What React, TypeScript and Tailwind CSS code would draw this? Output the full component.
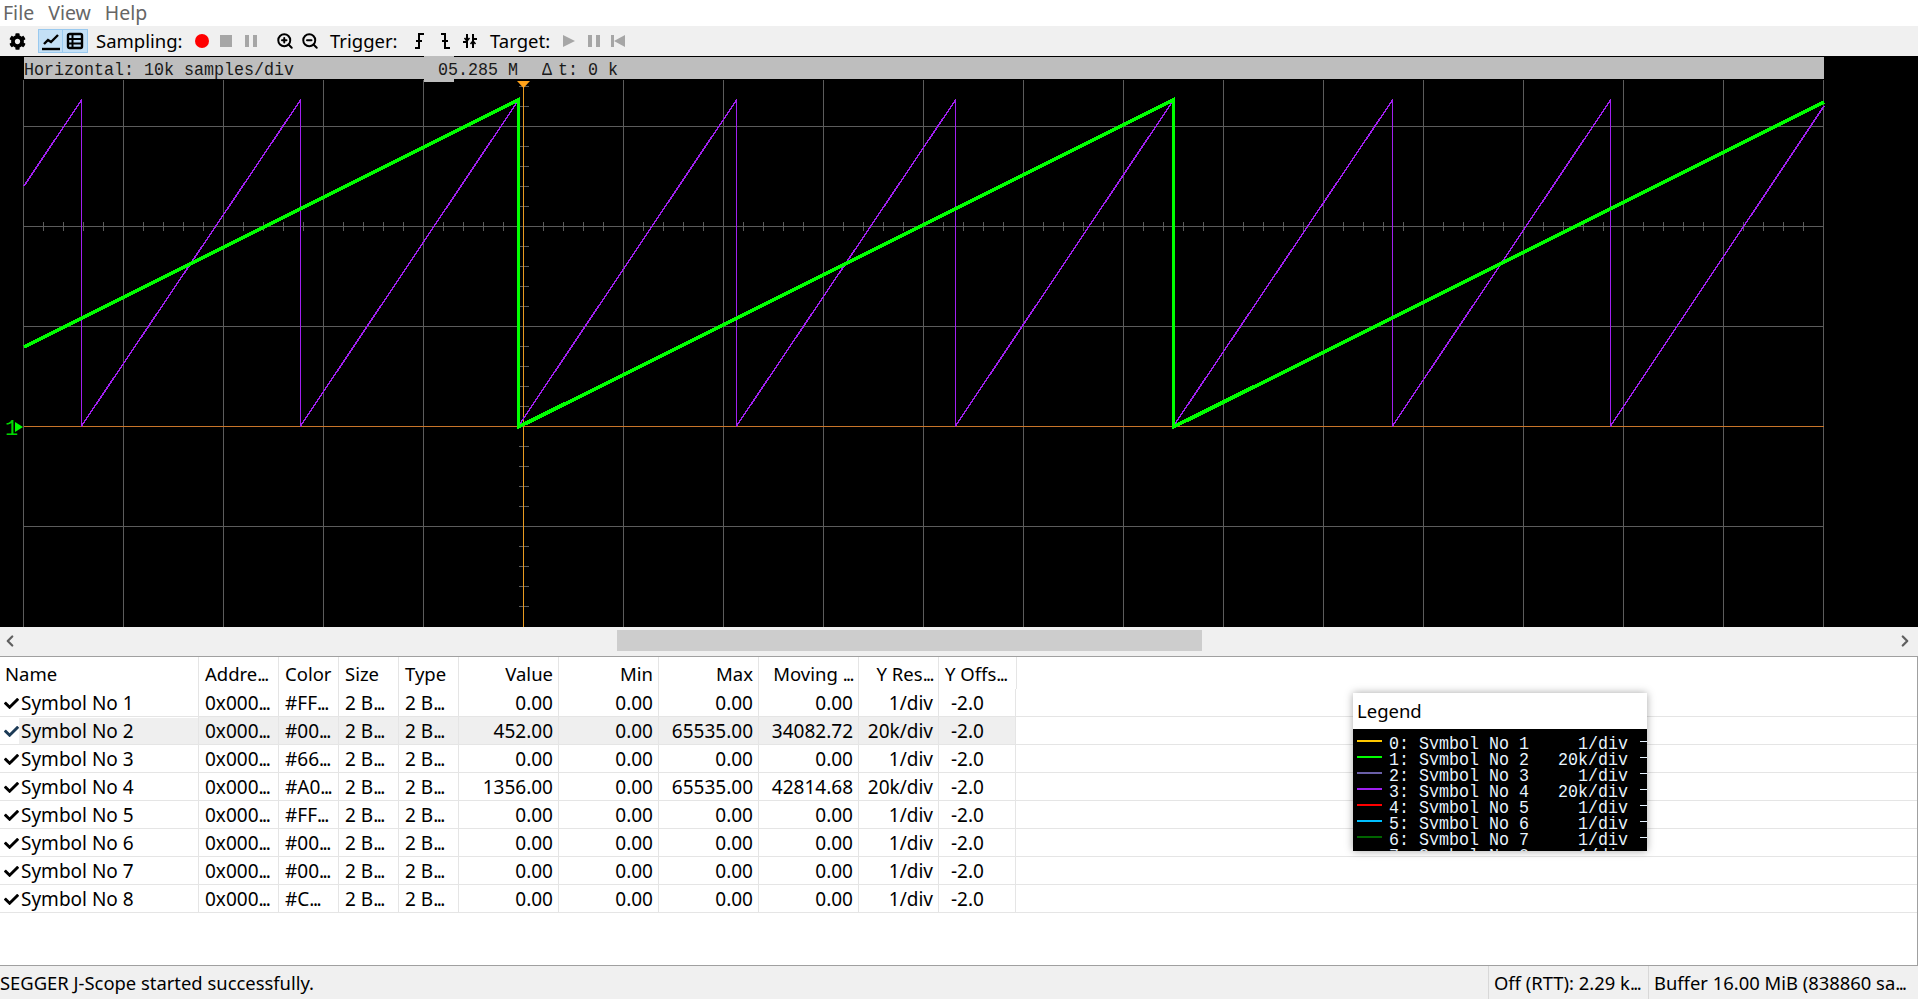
import { ChevronLeft, ChevronRight, ZoomIn, ZoomOut } from "lucide-react";
import { FaCog, FaCheck } from "react-icons/fa";

const UI_FONT = "font-['Noto_Sans','Open_Sans',sans-serif]";
const MONO_FONT = "font-['Liberation_Mono',monospace]";

const PURPLE_DROPS = [81.5, 300.5, 518.5, 736.5, 955.5, 1173.5, 1392.5, 1610.5];

function purplePoints() {
  const pts: string[] = ["24,186"];
  PURPLE_DROPS.forEach((x) => {
    pts.push(`${x},100`, `${x},426`);
  });
  pts.push("1824,106");
  return pts.join(" ");
}

const GREEN_POINTS = "24,347 518.5,100 518.5,427 1173.5,100 1173.5,427 1824,102";

const V_GRID = Array.from({ length: 19 }, (_, i) => 23.5 + i * 100).filter((x) => x !== 523.5);
const H_GRID = [126.5, 226.5, 326.5, 526.5];
const H_TICKS = Array.from({ length: 90 }, (_, i) => 23.5 + i * 20);
const V_TICKS = Array.from({ length: 27 }, (_, i) => 86.5 + i * 20);

function Scope() {
  return (
    <svg width="1918" height="571" viewBox="0 56 1918 571" className="block">
      <g stroke="#5c5c5c" strokeWidth="1" shapeRendering="crispEdges">
        {V_GRID.map((x) => (
          <line key={x} x1={x} x2={x} y1="80" y2="627" />
        ))}
        {H_GRID.map((y) => (
          <line key={y} x1="24" x2="1824" y1={y} y2={y} />
        ))}
        {H_TICKS.map((x) => (
          <line key={x} x1={x} x2={x} y1="222" y2="231" />
        ))}
        {V_TICKS.map((y) => (
          <line key={y} x1="519" x2="529" y1={y} y2={y} />
        ))}
      </g>
      <line x1="523.5" x2="523.5" y1="84" y2="627" stroke="#e89a20" shapeRendering="crispEdges" />
      <line x1="24" x2="1824" y1="426.5" y2="426.5" stroke="#c8752a" shapeRendering="crispEdges" />
      <polygon points="517,81 530,81 523.5,88" fill="#ffa21a" />
      <polyline points={purplePoints()} fill="none" stroke="#a020f0" strokeWidth="1.5" shapeRendering="crispEdges" />
      <polyline points={GREEN_POINTS} fill="none" stroke="#00ff00" strokeWidth="3.6" shapeRendering="crispEdges" />
      <text x="5" y="435" fill="#00d800" fontSize="22" fontFamily="Liberation Mono, monospace">
        1
      </text>
      <polygon points="15,422 23,427 15,432" fill="#00ff00" />
    </svg>
  );
}

function ChartIcon() {
  return (
    <svg width="20" height="20" viewBox="0 0 20 20" fill="none" stroke="#000" strokeWidth="2.4">
      <path d="M3 13 L7 9 L10 11 L17 4" />
      <path d="M1 18 H19" />
    </svg>
  );
}

function TableIcon() {
  return (
    <svg width="18" height="18" viewBox="0 0 18 18" fill="none" stroke="#000" strokeWidth="2">
      <rect x="2" y="2" width="14" height="14" rx="1.5" strokeWidth="2.4" />
      <path d="M2 7 H16 M2 11.5 H16 M6.5 2 V16" />
    </svg>
  );
}

function TriggerIcon({ kind }: { kind: "rise" | "fall" | "both" }) {
  if (kind === "both") {
    return (
      <svg width="14" height="18" viewBox="0 0 14 18" fill="none" stroke="#000" strokeWidth="2">
        <path d="M4 2 V16 M10 2 V16 M0 10 H4 M10 7 H14" />
        <path d="M1.5 6 L4 9 L6.5 6 M7.5 12 L10 9 L12.500 12" strokeWidth="1.5" />
      </svg>
    );
  }
  const d = kind === "rise" ? "M1 16 H5 V2 H10 M2 9 H8" : "M1 2 H5 V16 H10 M2 9 H8";
  return (
    <svg width="11" height="18" viewBox="0 0 11 18" fill="none" stroke="#000" strokeWidth="2">
      <path d={d} />
    </svg>
  );
}

function PauseIcon() {
  return (
    <span className="flex h-3 w-3 justify-between">
      <span className="h-3 w-1 bg-[#a6a6a6]" />
      <span className="h-3 w-1 bg-[#a6a6a6]" />
    </span>
  );
}

// the reference draws its "..." much tighter than this font does
function Trunc({ text }: { text: string }) {
  if (!text.endsWith("...")) return <>{text}</>;
  return (
    <span className="whitespace-pre">
      {text.slice(0, -3)}
      <span className="tracking-[-1.5px]">...</span>
    </span>
  );
}

function Toolbar() {
  return (
    <div className="flex h-[30px] items-center bg-[#f0f0f0] text-[18.5px] leading-[24px] text-black">
      <FaCog className="ml-[9px] h-[17px] w-[17px]" />
      <div className="ml-[12px] flex h-[24px] w-[50px] border border-[#99c9ef] bg-[#c4e0f6]">
        <span className="flex w-[24px] items-center justify-center border-r border-[#99c9ef]">
          <ChartIcon />
        </span>
        <span className="flex flex-1 items-center justify-center">
          <TableIcon />
        </span>
      </div>
      <span className="ml-[8px] w-[86px] whitespace-pre">Sampling:</span>
      <span className="ml-[13px] h-[14px] w-[14px] rounded-full bg-[#ff0000]" />
      <span className="ml-[11px] h-[12px] w-[12px] bg-[#a6a6a6]" />
      <span className="ml-[13px]">
        <PauseIcon />
      </span>
      <ZoomIn className="ml-[19px] h-[18px] w-[18px]" strokeWidth={2.6} />
      <ZoomOut className="ml-[7px] h-[18px] w-[18px]" strokeWidth={2.6} />
      <span className="ml-[11px] w-[68px] whitespace-pre">Trigger:</span>
      <span className="ml-[16px]">
        <TriggerIcon kind="rise" />
      </span>
      <span className="ml-[15px]">
        <TriggerIcon kind="fall" />
      </span>
      <span className="ml-[12px]">
        <TriggerIcon kind="both" />
      </span>
      <span className="ml-[13px] w-[60px] whitespace-pre">Target:</span>
      <span className="ml-[13px] h-0 w-0 border-y-[6px] border-l-[12px] border-y-transparent border-l-[#a6a6a6]" />
      <span className="ml-[13px]">
        <PauseIcon />
      </span>
      <span className="ml-[11px] flex items-center">
        <span className="h-3 w-[3px] bg-[#a6a6a6]" />
        <span className="h-0 w-0 border-y-[6px] border-r-[11px] border-y-transparent border-r-[#a6a6a6]" />
      </span>
    </div>
  );
}

type Row = {
  name: string;
  color: string;
  value: string;
  max: string;
  avg: string;
  res: string;
};

const ROWS: Row[] = [
  { name: "Symbol No 1", color: "#FF...", value: "0.00", max: "0.00", avg: "0.00", res: "1/div" },
  { name: "Symbol No 2", color: "#00...", value: "452.00", max: "65535.00", avg: "34082.72", res: "20k/div" },
  { name: "Symbol No 3", color: "#66...", value: "0.00", max: "0.00", avg: "0.00", res: "1/div" },
  { name: "Symbol No 4", color: "#A0...", value: "1356.00", max: "65535.00", avg: "42814.68", res: "20k/div" },
  { name: "Symbol No 5", color: "#FF...", value: "0.00", max: "0.00", avg: "0.00", res: "1/div" },
  { name: "Symbol No 6", color: "#00...", value: "0.00", max: "0.00", avg: "0.00", res: "1/div" },
  { name: "Symbol No 7", color: "#00...", value: "0.00", max: "0.00", avg: "0.00", res: "1/div" },
  { name: "Symbol No 8", color: "#C...", value: "0.00", max: "0.00", avg: "0.00", res: "1/div" },
];

const LEGEND = [
  { label: "0: Symbol No 1", res: "1/div", color: "bg-[#ffc800]" },
  { label: "1: Symbol No 2", res: "20k/div", color: "bg-[#00ff00]" },
  { label: "2: Symbol No 3", res: "1/div", color: "bg-[#6a5fa8]" },
  { label: "3: Symbol No 4", res: "20k/div", color: "bg-[#a020f0]" },
  { label: "4: Symbol No 5", res: "1/div", color: "bg-[#ff0000]" },
  { label: "5: Symbol No 6", res: "1/div", color: "bg-[#00bfff]" },
  { label: "6: Symbol No 7", res: "1/div", color: "bg-[#006400]" },
  { label: "7: Symbol No 8", res: "1/div", color: "bg-[#c0c0c0]" },
];

const CELL = "flex h-full items-center whitespace-pre border-r border-[#e5e5e5] pt-[1px]";

function Table() {
  return (
    <div className="text-[19px] leading-[24px] text-black">
      <div className="flex h-[32px] text-[18.5px]">
        <div className={`${CELL} w-[199px] pl-[5px]`}>Name</div>
        <div className={`${CELL} w-[80px] pl-[6px]`}><Trunc text="Addre..." /></div>
        <div className={`${CELL} w-[60px] pl-[6px]`}>Color</div>
        <div className={`${CELL} w-[60px] pl-[6px]`}>Size</div>
        <div className={`${CELL} w-[60px] pl-[6px]`}>Type</div>
        <div className={`${CELL} w-[100px] justify-end pr-[5px]`}>Value</div>
        <div className={`${CELL} w-[100px] justify-end pr-[5px]`}>Min</div>
        <div className={`${CELL} w-[100px] justify-end pr-[5px]`}>Max</div>
        <div className={`${CELL} w-[100px] justify-end pr-[5px]`}><Trunc text="Moving ..." /></div>
        <div className={`${CELL} w-[80px] justify-end pr-[5px]`}><Trunc text="Y Res..." /></div>
        <div className={`${CELL} w-[78px] pl-[6px]`}><Trunc text="Y Offs..." /></div>
      </div>
      {ROWS.map((r, i) => {
        const selected = i === 1;
        return (
          <div key={r.name} className="flex h-[28px] border-b border-[#e5e5e5]">
            <div className={`${CELL} w-[199px]`}>
              <span className="flex h-full w-[19px] items-center justify-end">
                <FaCheck className={selected ? "h-[15px] w-[15px] text-[#1c3a56]" : "h-[15px] w-[15px] text-black"} />
              </span>
              <span className={selected ? "flex h-full flex-1 items-center bg-[#efefef] pl-[2px]" : "pl-[2px]"}>{r.name}</span>
            </div>
            <div className={`flex w-[817px] ${selected ? "bg-[#efefef]" : ""}`}>
              <div className={`${CELL} w-[80px] pl-[6px]`}><Trunc text="0x000..." /></div>
              <div className={`${CELL} w-[60px] pl-[6px]`}><Trunc text={r.color} /></div>
              <div className={`${CELL} w-[60px] pl-[6px]`}><Trunc text="2 B..." /></div>
              <div className={`${CELL} w-[60px] pl-[6px]`}><Trunc text="2 B..." /></div>
              <div className={`${CELL} w-[100px] justify-end pr-[5px]`}>{r.value}</div>
              <div className={`${CELL} w-[100px] justify-end pr-[5px]`}>0.00</div>
              <div className={`${CELL} w-[100px] justify-end pr-[5px]`}>{r.max}</div>
              <div className={`${CELL} w-[100px] justify-end pr-[5px]`}>{r.avg}</div>
              <div className={`${CELL} w-[80px] justify-end pr-[5px]`}>{r.res}</div>
              <div className={`${CELL} w-[77px] pl-[12px]`}>-2.0</div>
            </div>
          </div>
        );
      })}
    </div>
  );
}

function Legend() {
  return (
    <div className="absolute left-[1353px] top-[36px] w-[294px] bg-white shadow-[0_0_8px_rgba(0,0,0,0.35)]">
      <div className="flex h-[36px] items-center pl-[4px] text-[18.5px] text-black">Legend</div>
      <div className={`h-[122px] overflow-hidden bg-black pt-[4px] text-[16.67px] text-[#e8f4ff] ${MONO_FONT}`}>
        {LEGEND.map((l) => (
          <div key={l.label} className="relative flex h-[16px] items-start overflow-hidden whitespace-pre leading-[16px]">
            <span className={`ml-[4px] mt-[7px] h-[2px] w-[25px] ${l.color}`} />
            <span className="ml-[7px] mt-[3px] scale-y-[1.15]">{l.label}</span>
            <span className="absolute right-[19px] top-[3px] scale-y-[1.15]">{l.res}</span>
            <span className="absolute right-0 top-[8px] h-[1px] w-[7px] bg-[#e8f4ff]" />
          </div>
        ))}
      </div>
    </div>
  );
}

export default function App() {
  return (
    <div className={`flex h-[999px] w-[1918px] flex-col overflow-hidden bg-white ${UI_FONT}`}>
      <div className="flex h-[26px] items-center gap-[14px] pl-[3px] text-[19.5px] leading-[22px] text-[#666666]">
        <span>File</span>
        <span>View</span>
        <span>Help</span>
      </div>
      <Toolbar />

      <div className="relative h-[571px] bg-black">
        <Scope />
        <div className="absolute left-[424px] top-0 h-[26px] w-[30px] bg-[#bebebe]" />
        <div className={`absolute left-[24px] top-[1px] flex h-[22px] w-[1800px] items-center bg-[#bebebe] pt-[2px] text-[16.67px] text-[#1a1a1a] ${MONO_FONT}`}>
          <span className="w-[414px] origin-center scale-y-[1.15] whitespace-pre">Horizontal: 10k samples/div</span>
          <span className="w-[104px] scale-y-[1.15] whitespace-pre">05.285 M</span>
          <span className="scale-y-[1.15] whitespace-pre">
            <span className="inline-block w-[16px]">Δ</span>t: 0 k
          </span>
        </div>
      </div>

      <div className="relative flex h-[30px] items-center justify-between border-b border-[#a0a0a0] bg-[#f0f0f0] pb-[2px] pl-[1px] pr-[4px] text-[#606060]">
        <ChevronLeft className="h-[18px] w-[18px]" strokeWidth={3} />
        <div className="absolute left-[617px] top-[3px] h-[21px] w-[585px] bg-[#cdcdcd]" />
        <ChevronRight className="h-[18px] w-[18px]" strokeWidth={3} />
      </div>

      <div className="relative flex-1 border-b border-r border-[#a0a0a0]">
        <Table />
        <Legend />
      </div>

      <div className="flex h-[33px] items-center bg-[#f0f0f0] text-[18.4px] leading-[24px] text-black">
        <span className="w-[1488px] whitespace-pre">SEGGER J-Scope started successfully.</span>
        <span className="flex h-full w-[160px] items-center whitespace-pre border-l border-[#d8d8d8] pl-[5px]">
          <Trunc text="Off (RTT): 2.29 k..." />
        </span>
        <span className="flex h-full flex-1 items-center whitespace-pre border-l border-[#d8d8d8] pl-[5px]">
          <Trunc text="Buffer 16.00 MiB (838860 sa..." />
        </span>
      </div>
    </div>
  );
}
